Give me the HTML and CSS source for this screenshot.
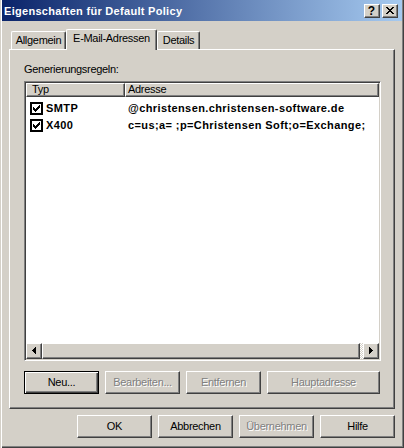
FILE: index.html
```html
<!DOCTYPE html>
<html lang="de">
<head>
<meta charset="utf-8">
<title>Eigenschaften für Default Policy</title>
<link rel="stylesheet" href="styles.css">
</head>
<body>
<div class="window">
  <div class="titlebar">
    <span class="title">Eigenschaften für Default Policy</span>
    <div class="tbtns">
      <span class="tbtn help">?</span>
      <span class="tbtn">
        <svg width="8" height="7" viewBox="0 0 8 7"><path d="M0 0h2v1h-2zM6 0h2v1h-2zM1 1h2v1h-2zM5 1h2v1h-2zM2 2h4v1h-4zM3 3h2v1h-2zM2 4h4v1h-4zM1 5h2v1h-2zM5 5h2v1h-2zM0 6h2v1h-2zM6 6h2v1h-2z" fill="#000"/></svg>
      </span>
    </div>
  </div>
  <div class="body">
    <div class="tabs">
      <div class="tab t-a">Allgemein</div>
      <div class="tab sel">E-Mail-Adressen</div>
      <div class="tab t-d">Details</div>
    </div>
    <div class="panel">
      <div class="label">Generierungsregeln:</div>
      <div class="list">
        <div class="lhead">
          <div class="hcol c1">Typ</div>
          <div class="hcol c2">Adresse</div>
        </div>
        <div class="rows">
          <div class="row">
            <div class="cell c1"><svg class="cb" width="13" height="13" viewBox="0 0 13 13"><rect x="0" y="0" width="13" height="13" fill="#000"/><rect x="2" y="2" width="9" height="9" fill="#fff"/><path d="M9 3h1v1h-1zM8 4h2v1h-2zM3 5h1v1h-1zM7 5h3v1h-3zM3 6h2v1h-2zM6 6h3v1h-3zM3 7h5v1h-5zM4 8h3v1h-3zM5 9h1v1h-1z" fill="#000"/></svg>SMTP</div>
            <div class="cell c2">@christensen.christensen-software.de</div>
          </div>
          <div class="row">
            <div class="cell c1"><svg class="cb" width="13" height="13" viewBox="0 0 13 13"><rect x="0" y="0" width="13" height="13" fill="#000"/><rect x="2" y="2" width="9" height="9" fill="#fff"/><path d="M9 3h1v1h-1zM8 4h2v1h-2zM3 5h1v1h-1zM7 5h3v1h-3zM3 6h2v1h-2zM6 6h3v1h-3zM3 7h5v1h-5zM4 8h3v1h-3zM5 9h1v1h-1z" fill="#000"/></svg>X400</div>
            <div class="cell c2">c=us;a= ;p=Christensen Soft;o=Exchange;</div>
          </div>
        </div>
        <div class="hscroll">
          <span class="sbtn"><svg width="4" height="7" viewBox="0 0 4 7"><path d="M0 3h1v1h-1zM1 2h1v3h-1zM2 1h1v5h-1zM3 0h1v7h-1z" fill="#000"/></svg></span>
          <span class="thumb"></span>
          <span class="dither"></span>
          <span class="sbtn"><svg width="4" height="7" viewBox="0 0 4 7"><path d="M3 3h1v1h-1zM2 2h1v3h-1zM1 1h1v5h-1zM0 0h1v7h-1z" fill="#000"/></svg></span>
        </div>
      </div>
      <div class="pbtns">
        <div class="btn default">Neu...</div>
        <div class="btn dis">Bearbeiten...</div>
        <div class="btn dis">Entfernen</div>
        <div class="btn wide dis">Hauptadresse</div>
      </div>
    </div>
    <div class="dbtns">
      <div class="btn">OK</div>
      <div class="btn">Abbrechen</div>
      <div class="btn dis">Übernehmen</div>
      <div class="btn">Hilfe</div>
    </div>
  </div>
</div>
</body>
</html>
```
FILE: styles.css
```css
* { box-sizing: border-box; }
html, body { margin: 0; padding: 0; }
body {
  background: #D4D0C8;
  font-family: "Liberation Sans", Arial, sans-serif;
  font-size: 11px;
  letter-spacing: -0.3px;
  color: #000;
  width: 404px;
  height: 448px;
  overflow: hidden;
}
.window {
  width: 404px;
  height: 448px;
  padding: 0 2px 2px 2px;
  background: #D4D0C8;
  box-shadow: inset 1px 0 0 #D4D0C8, inset 2px 0 0 #fff, inset -1px -1px 0 #404040, inset -2px -2px 0 #808080;
}
.titlebar {
  height: 21px;
  display: flex;
  align-items: flex-start;
  padding-left: 2px;
  background: linear-gradient(to right, #0A246A, #A6CAF0);
}
.title {
  flex: 1;
  color: #fff;
  font-weight: bold;
  letter-spacing: 0.3px;
  line-height: 13px;
  margin-top: 5px;
  white-space: nowrap;
}
.tbtns {
  display: flex;
  gap: 2px;
  margin-top: 4px;
  margin-right: 4px;
}
.tbtn, .sbtn, .thumb {
  background: #D4D0C8;
  border-top: 1px solid #fff;
  border-left: 1px solid #fff;
  border-right: 1px solid #404040;
  border-bottom: 1px solid #404040;
  box-shadow: inset -1px -1px 0 #808080;
}
.tbtn {
  width: 16px;
  height: 14px;
  display: flex;
  align-items: center;
  justify-content: center;
  padding: 0 1px 1px 0;
}
.tbtn.help {
  font-weight: bold;
  font-size: 12px;
  line-height: 12px;
  letter-spacing: 0;
}
.body {
  padding: 8px 7px 0 7px;
}
.tabs {
  display: flex;
  align-items: flex-end;
  height: 20px;
  padding-left: 2px;
  position: relative;
  z-index: 1;
}
.tab {
  height: 18px;
  border-top: 1px solid #fff;
  border-left: 1px solid #fff;
  border-right: 1px solid #404040;
  box-shadow: inset -1px 0 0 #808080;
  border-radius: 2px 2px 0 0;
  padding-top: 2px;
  line-height: 13px;
  text-align: center;
  background: #D4D0C8;
  white-space: nowrap;
}
.t-a { width: 55px; }
.t-d { width: 43px; }
.tab.sel {
  width: 91px;
  height: 21px;
  margin-bottom: -1px;
}
.panel {
  height: 360px;
  border-top: 1px solid #fff;
  border-left: 1px solid #fff;
  border-right: 1px solid #404040;
  border-bottom: 1px solid #404040;
  box-shadow: inset -1px -1px 0 #808080;
  padding: 13px 0 0 14px;
}
.label {
  height: 13px;
  line-height: 13px;
}
.list {
  margin-top: 5px;
  width: 357px;
  height: 280px;
  border-top: 1px solid #808080;
  border-left: 1px solid #808080;
  border-right: 1px solid #fff;
  border-bottom: 1px solid #fff;
  box-shadow: inset 1px 1px 0 #404040, inset -1px -1px 0 #D4D0C8;
  padding: 1px;
  display: flex;
  flex-direction: column;
  background: #fff;
}
.lhead {
  display: flex;
  height: 14px;
  background: #D4D0C8;
}
.hcol {
  border-top: 1px solid #fff;
  border-left: 1px solid #fff;
  border-right: 1px solid #404040;
  border-bottom: 1px solid #404040;
  box-shadow: inset -1px -1px 0 #808080;
  line-height: 11px;
  white-space: nowrap;
}
.hcol.c1 { width: 99px; padding-left: 5px; }
.hcol.c2 { flex: 1; padding-left: 2px; }
.rows {
  flex: 1;
  padding-top: 3px;
  background: #fff;
}
.row {
  display: flex;
  height: 17px;
  line-height: 17px;
  font-weight: bold;
  letter-spacing: 0.4px;
}
.cell.c1 {
  width: 99px;
  display: flex;
  align-items: center;
  padding-left: 4px;
}
.cb {
  display: block;
  margin-right: 3px;
  flex: none;
}
.cell.c2 {
  padding-left: 3px;
  white-space: nowrap;
}
.hscroll {
  height: 16px;
  display: flex;
  background: #D4D0C8;
}
.sbtn {
  width: 16px;
  height: 16px;
  display: flex;
  align-items: center;
  justify-content: center;
  padding: 0 1px 1px 0;
}
.sbtn svg { display: block; }
.thumb {
  width: 318px;
  height: 16px;
}
.dither {
  width: 3px;
  height: 16px;
  background: repeating-conic-gradient(#fff 0 25%, #D4D0C8 0 50%) 0 0 / 2px 2px;
}
.pbtns {
  display: flex;
  gap: 6px;
  margin-top: 10px;
}
.dbtns {
  display: flex;
  justify-content: flex-end;
  gap: 6px;
  margin-top: 6px;
}
.btn {
  width: 75px;
  height: 23px;
  display: flex;
  align-items: center;
  justify-content: center;
  padding-bottom: 2px;
  background: #D4D0C8;
  border-top: 1px solid #fff;
  border-left: 1px solid #fff;
  border-right: 1px solid #404040;
  border-bottom: 1px solid #404040;
  box-shadow: inset -1px -1px 0 #808080;
  white-space: nowrap;
}
.btn.wide { width: 113px; }
.btn.default {
  border: 1px solid #000;
  box-shadow: inset 1px 1px 0 #fff, inset -1px -1px 0 #404040, inset -2px -2px 0 #808080;
}
.btn.dis {
  color: #808080;
  text-shadow: 1px 1px 0 #fff;
}
```
